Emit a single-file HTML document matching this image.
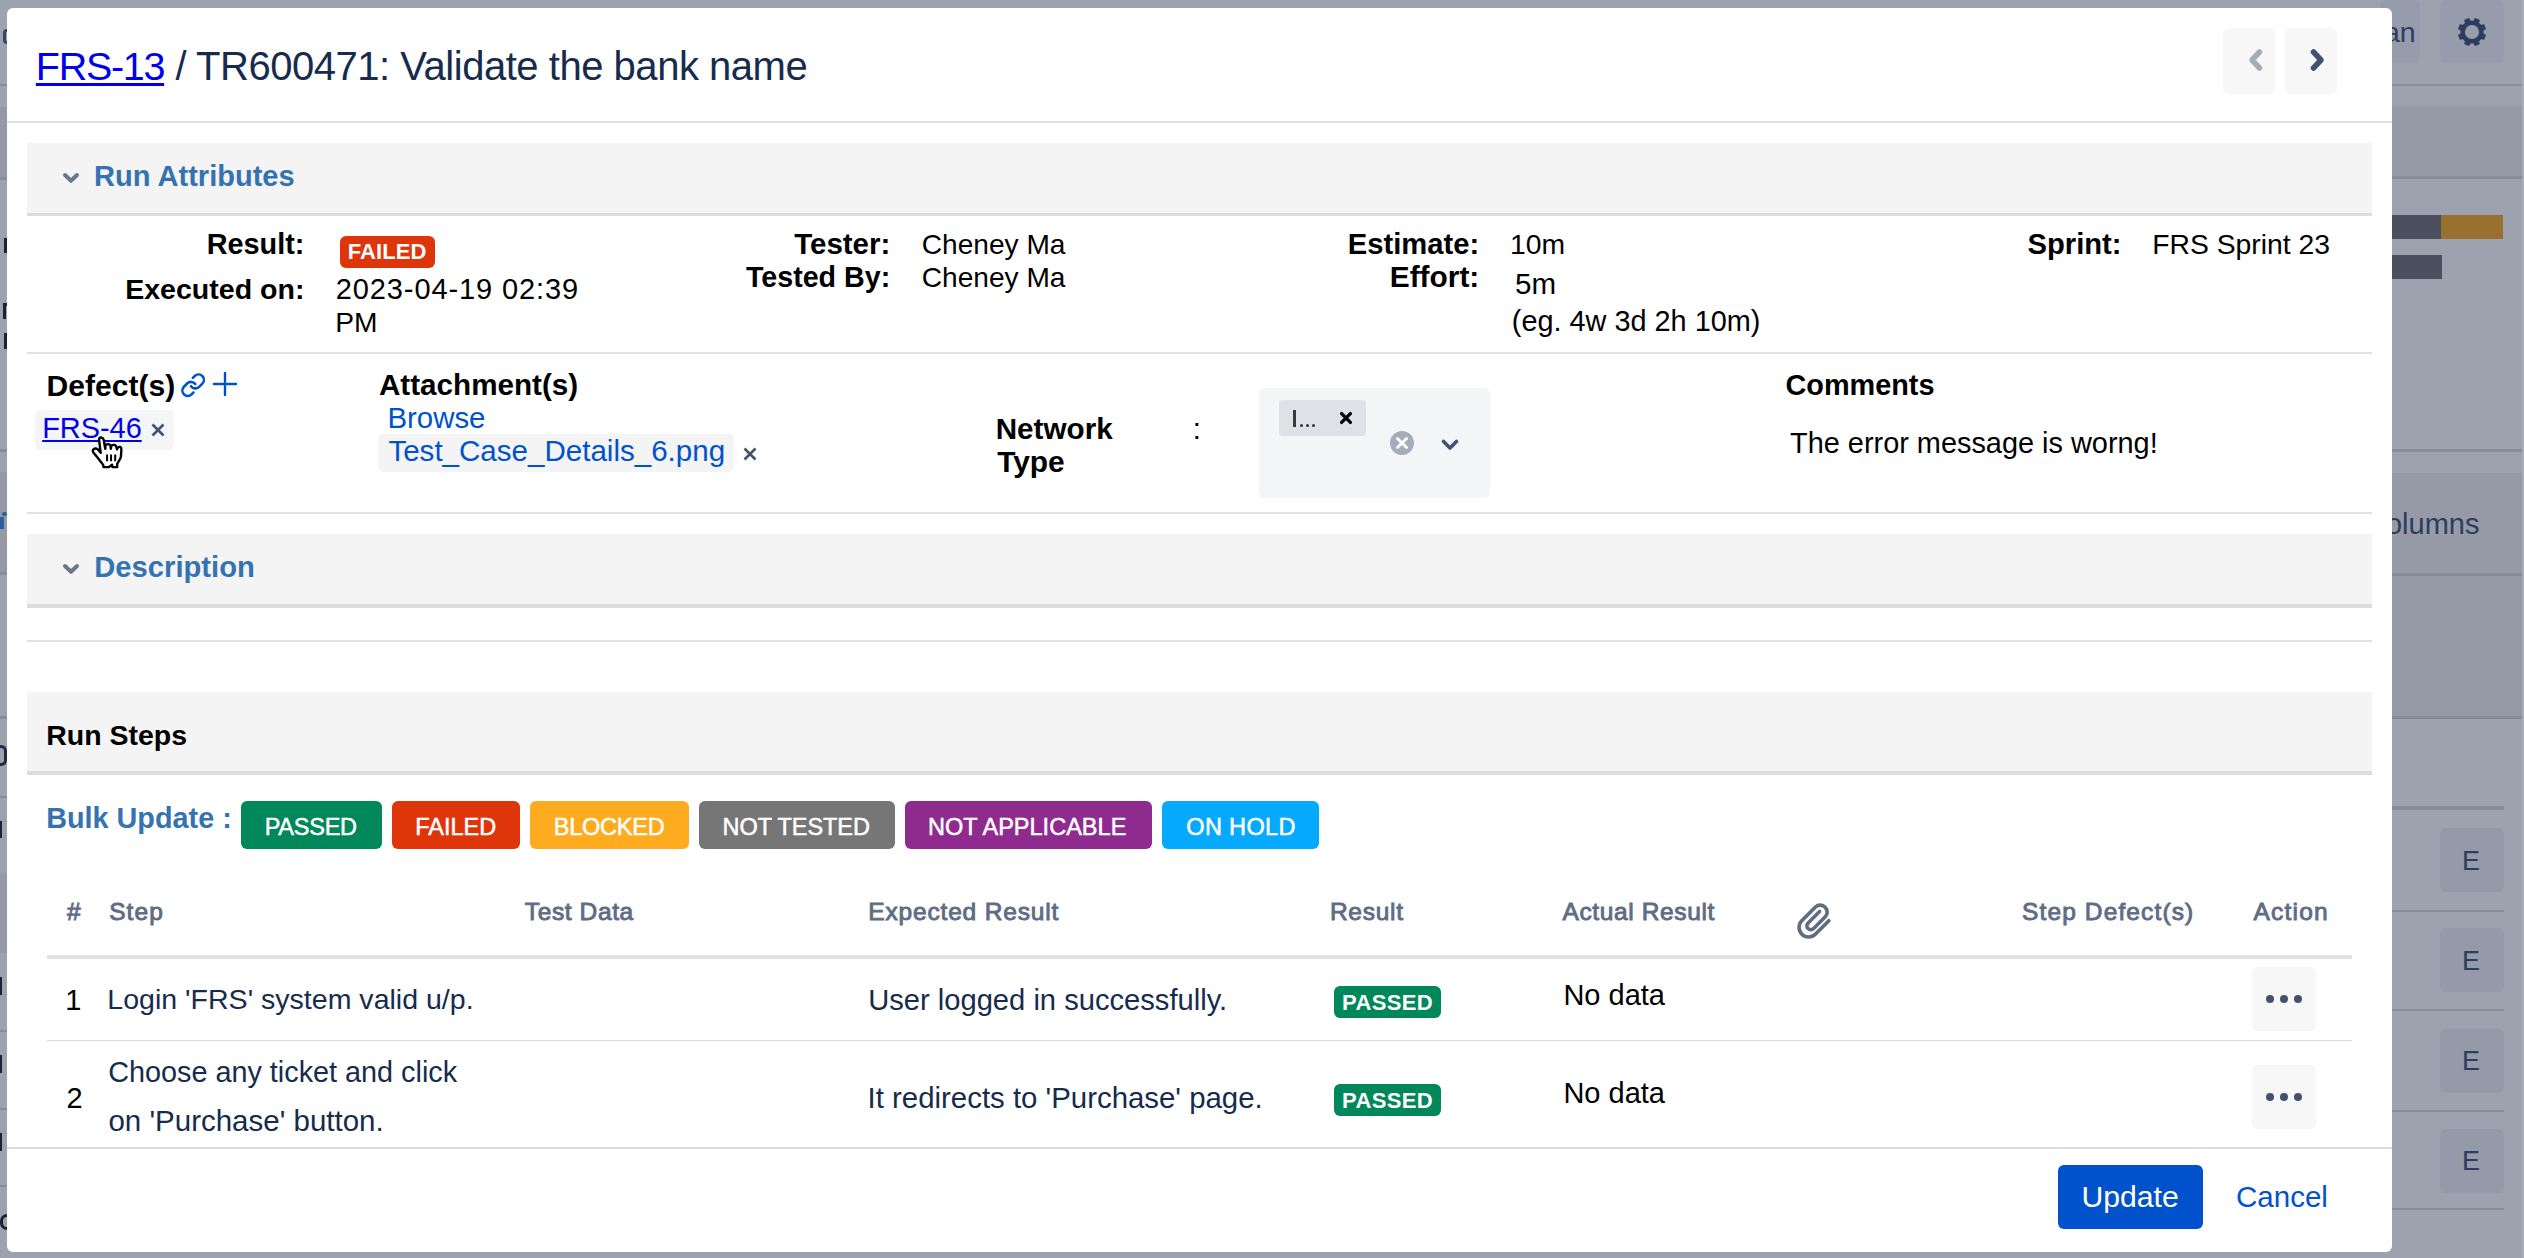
<!DOCTYPE html>
<html><head><meta charset="utf-8"><title>Test Run</title>
<style>
html,body{margin:0;padding:0;}
body{width:2524px;height:1258px;position:relative;overflow:hidden;background:#9ca2ae;font-family:"Liberation Sans", sans-serif;}
.t{position:absolute;white-space:pre;line-height:1.15;font-family:"Liberation Sans", sans-serif;}
</style></head><body>
<div style="position:absolute;left:2380px;top:0px;width:40.00px;height:63.00px;background:#969cab;border-radius:6px;"></div>
<div style="position:absolute;left:2440px;top:0px;width:64.00px;height:63.00px;background:#969cab;border-radius:6px;"></div>
<div style="position:absolute;left:2392px;top:84px;width:132.00px;height:2.00px;background:#878d99;border-radius:0px;"></div>
<div style="position:absolute;left:2392px;top:106px;width:132.00px;height:70.00px;background:#959aa6;border-radius:0px;"></div>
<div style="position:absolute;left:2392px;top:176px;width:132.00px;height:3.00px;background:#878d99;border-radius:0px;"></div>
<div style="position:absolute;left:2392px;top:215px;width:49.00px;height:24.00px;background:#4b505f;border-radius:0px;"></div>
<div style="position:absolute;left:2441px;top:215px;width:62.00px;height:24.00px;background:#9a702e;border-radius:0px;"></div>
<div style="position:absolute;left:2392px;top:255px;width:50.00px;height:24.00px;background:#4b505f;border-radius:0px;"></div>
<div style="position:absolute;left:2392px;top:449px;width:132.00px;height:3.00px;background:#878d99;border-radius:0px;"></div>
<div style="position:absolute;left:2392px;top:473px;width:132.00px;height:244.00px;background:#959aa6;border-radius:0px;"></div>
<div style="position:absolute;left:2392px;top:573px;width:132.00px;height:3.00px;background:#878d99;border-radius:0px;"></div>
<div style="position:absolute;left:2392px;top:716px;width:132.00px;height:3.00px;background:#878d99;border-radius:0px;"></div>
<div style="position:absolute;left:2392px;top:806px;width:112.00px;height:4.00px;background:#878d99;border-radius:0px;"></div>
<div style="position:absolute;left:2440px;top:828px;width:64.00px;height:64.00px;background:#959aa8;border-radius:6px;"></div>
<div style="position:absolute;left:2440px;top:928px;width:64.00px;height:64.00px;background:#959aa8;border-radius:6px;"></div>
<div style="position:absolute;left:2440px;top:1029px;width:64.00px;height:64.00px;background:#959aa8;border-radius:6px;"></div>
<div style="position:absolute;left:2440px;top:1129px;width:64.00px;height:64.00px;background:#959aa8;border-radius:6px;"></div>
<div style="position:absolute;left:2392px;top:910px;width:112.00px;height:2.00px;background:#878d99;border-radius:0px;"></div>
<div style="position:absolute;left:2392px;top:1009px;width:112.00px;height:2.00px;background:#878d99;border-radius:0px;"></div>
<div style="position:absolute;left:2392px;top:1110px;width:112.00px;height:2.00px;background:#878d99;border-radius:0px;"></div>
<div style="position:absolute;left:2392px;top:1208px;width:112.00px;height:2.00px;background:#878d99;border-radius:0px;"></div>
<div style="position:absolute;left:2522px;top:0px;width:2.00px;height:1258.00px;background:#a8adb8;border-radius:0px;"></div>
<div style="position:absolute;left:0px;top:84px;width:7.00px;height:2.00px;background:#878d99;border-radius:0px;"></div>
<div style="position:absolute;left:0px;top:107px;width:7.00px;height:71.00px;background:#959aa6;border-radius:0px;"></div>
<div style="position:absolute;left:0px;top:177px;width:7.00px;height:3.00px;background:#878d99;border-radius:0px;"></div>
<div style="position:absolute;left:0px;top:449px;width:7.00px;height:3.00px;background:#878d99;border-radius:0px;"></div>
<div style="position:absolute;left:0px;top:472px;width:7.00px;height:102.00px;background:#959aa6;border-radius:0px;"></div>
<div style="position:absolute;left:0px;top:572px;width:7.00px;height:3.00px;background:#878d99;border-radius:0px;"></div>
<div style="position:absolute;left:0px;top:716px;width:7.00px;height:3.00px;background:#878d99;border-radius:0px;"></div>
<div style="position:absolute;left:0px;top:796px;width:7.00px;height:2.00px;background:#878d99;border-radius:0px;"></div>
<div style="position:absolute;left:0px;top:873px;width:7.00px;height:80.00px;background:#959aa6;border-radius:0px;"></div>
<div style="position:absolute;left:0px;top:1030px;width:7.00px;height:2.00px;background:#878d99;border-radius:0px;"></div>
<div style="position:absolute;left:0px;top:1108px;width:7.00px;height:2.00px;background:#878d99;border-radius:0px;"></div>
<div style="position:absolute;left:0px;top:1185px;width:7.00px;height:2.00px;background:#878d99;border-radius:0px;"></div>
<div style="position:absolute;left:2.5px;top:29px;width:4.50px;height:15.00px;background:transparent;border-radius:0px;border:3px solid #34466a;border-right:none;border-radius:8px 0 0 8px;box-sizing:border-box;"></div>
<div style="position:absolute;left:3.5px;top:238px;width:3.00px;height:15.00px;background:#1a2235;border-radius:0px;"></div>
<div style="position:absolute;left:5px;top:238px;width:2.00px;height:3.00px;background:#1a2235;border-radius:0px;"></div>
<div style="position:absolute;left:2.5px;top:303px;width:3.00px;height:16.00px;background:#1a2235;border-radius:0px;"></div>
<div style="position:absolute;left:4.5px;top:303px;width:2.50px;height:3.00px;background:#1a2235;border-radius:0px;"></div>
<div style="position:absolute;left:4px;top:333px;width:3.00px;height:16.00px;background:#1a2235;border-radius:0px;"></div>
<div style="position:absolute;left:0px;top:517px;width:3.50px;height:12.00px;background:#2d5e9e;border-radius:0px;"></div>
<div style="position:absolute;left:2px;top:512px;width:5.00px;height:4.00px;background:#2d5e9e;border-radius:2px;"></div>
<div style="position:absolute;left:0px;top:745px;width:7.00px;height:21.00px;background:transparent;border-radius:0px;border:3px solid #1f2a44;border-left:none;border-radius:0 6px 6px 0;box-sizing:border-box;"></div>
<div style="position:absolute;left:0px;top:821px;width:1.50px;height:17.00px;background:#1a2235;border-radius:0px;"></div>
<div style="position:absolute;left:0px;top:977px;width:1.50px;height:18.00px;background:#1a2235;border-radius:0px;"></div>
<div style="position:absolute;left:0px;top:1055px;width:1.50px;height:18.00px;background:#1a2235;border-radius:0px;"></div>
<div style="position:absolute;left:0px;top:1133px;width:1.50px;height:18.00px;background:#1a2235;border-radius:0px;"></div>
<div style="position:absolute;left:0px;top:1214px;width:7.00px;height:16.00px;background:transparent;border-radius:0px;border:3.5px solid #1a2235;border-right:none;border-radius:8px 0 0 8px;box-sizing:border-box;"></div>
<div class="t" style="left:2383.90px;top:16px;font-size:28.5px;font-weight:400;color:#2c3d5f;letter-spacing:0px;">an</div>
<div class="t" style="left:2385.98px;top:508px;font-size:29.0px;font-weight:400;color:#2c3d5f;letter-spacing:0px;">olumns</div>
<div class="t" style="left:2461.91px;top:846px;font-size:27.0px;font-weight:400;color:#2c3d5f;letter-spacing:0px;">E</div>
<div class="t" style="left:2461.91px;top:946px;font-size:27.0px;font-weight:400;color:#2c3d5f;letter-spacing:0px;">E</div>
<div class="t" style="left:2461.91px;top:1046px;font-size:27.0px;font-weight:400;color:#2c3d5f;letter-spacing:0px;">E</div>
<div class="t" style="left:2461.91px;top:1146px;font-size:27.0px;font-weight:400;color:#2c3d5f;letter-spacing:0px;">E</div>
<svg style="position:absolute;left:2452px;top:12px;overflow:visible;" width="40" height="40" viewBox="0 0 40 40"><g transform="translate(20 20)" fill="#2c3d5f"><circle r="11.6"/><rect x="-2.9" y="-14.2" width="5.8" height="6" rx="1.2" transform="rotate(22.5)"/><rect x="-2.9" y="-14.2" width="5.8" height="6" rx="1.2" transform="rotate(67.5)"/><rect x="-2.9" y="-14.2" width="5.8" height="6" rx="1.2" transform="rotate(112.5)"/><rect x="-2.9" y="-14.2" width="5.8" height="6" rx="1.2" transform="rotate(157.5)"/><rect x="-2.9" y="-14.2" width="5.8" height="6" rx="1.2" transform="rotate(202.5)"/><rect x="-2.9" y="-14.2" width="5.8" height="6" rx="1.2" transform="rotate(247.5)"/><rect x="-2.9" y="-14.2" width="5.8" height="6" rx="1.2" transform="rotate(292.5)"/><rect x="-2.9" y="-14.2" width="5.8" height="6" rx="1.2" transform="rotate(337.5)"/><circle r="7.1" fill="#979dab"/></g></svg>
<div style="position:absolute;left:7px;top:8px;width:2385.00px;height:1244.00px;background:#ffffff;border-radius:6px;"></div>
<div class="t" style="left:35.84px;top:44px;font-size:39.5px;font-weight:400;color:#0000ee;letter-spacing:-1.3px;text-decoration:underline;text-decoration-thickness:3px;text-underline-offset:3px;">FRS-13</div>
<div class="t" style="left:175.50px;top:43px;font-size:40.0px;font-weight:400;color:#172b4d;letter-spacing:-0.474px;">/ TR600471: Validate the bank name</div>
<div style="position:absolute;left:2223px;top:28px;width:52.00px;height:66.00px;background:#f7f7f7;border-radius:6px;"></div>
<div style="position:absolute;left:2285px;top:28px;width:52.00px;height:66.00px;background:#f7f7f7;border-radius:6px;"></div>
<svg style="position:absolute;left:2240px;top:45px;overflow:visible;" width="28" height="30" viewBox="0 0 28 30"><path d="M19.5 7 L12 15 L19.5 23" fill="none" stroke="#a5adba" stroke-width="5.5" stroke-linecap="round" stroke-linejoin="round"/></svg>
<svg style="position:absolute;left:2304px;top:45px;overflow:visible;" width="28" height="30" viewBox="0 0 28 30"><path d="M9.5 7 L17 15 L9.5 23" fill="none" stroke="#42526e" stroke-width="5.5" stroke-linecap="round" stroke-linejoin="round"/></svg>
<div style="position:absolute;left:7px;top:121px;width:2385.00px;height:2.00px;background:#e1e1e1;border-radius:0px;"></div>
<div style="position:absolute;left:27px;top:143px;width:2345.00px;height:70.00px;background:#f4f4f4;border-radius:0px;"></div>
<div style="position:absolute;left:27px;top:213px;width:2345.00px;height:3.00px;background:#dcdcdc;border-radius:0px;"></div>
<svg style="position:absolute;left:60px;top:170px;overflow:visible;" width="22" height="16" viewBox="0 0 22 16"><path d="M5 5 L11 10.8 L17 5" fill="none" stroke="#6b778c" stroke-width="4" stroke-linecap="round" stroke-linejoin="round"/></svg>
<div class="t" style="left:94.06px;top:160px;font-size:29.05px;font-weight:700;color:#3572b0;letter-spacing:0px;">Run Attributes</div>
<div class="t" style="left:206.71px;top:228px;font-size:28.85px;font-weight:700;color:#000;letter-spacing:0px;">Result:</div>
<div class="t" style="left:125.20px;top:273px;font-size:28.55px;font-weight:700;color:#000;letter-spacing:0px;">Executed on:</div>
<div style="position:absolute;left:340px;top:236px;width:95.00px;height:32.00px;background:#de350b;border-radius:6px;"></div>
<div class="t" style="left:347.68px;top:239px;font-size:22.0px;font-weight:700;color:#fff;letter-spacing:0.121px;">FAILED</div>
<div class="t" style="left:335.75px;top:273px;font-size:29.0px;font-weight:400;color:#000;letter-spacing:0.9px;">2023-04-19 02:39</div>
<div class="t" style="left:335.24px;top:306px;font-size:28.2px;font-weight:400;color:#000;letter-spacing:0px;">PM</div>
<div class="t" style="left:794.17px;top:227px;font-size:29.5px;font-weight:700;color:#000;letter-spacing:0px;">Tester:</div>
<div class="t" style="left:745.92px;top:261px;font-size:28.65px;font-weight:700;color:#000;letter-spacing:0px;">Tested By:</div>
<div class="t" style="left:921.80px;top:229px;font-size:28.1px;font-weight:400;color:#000;letter-spacing:0px;">Cheney Ma</div>
<div class="t" style="left:921.80px;top:262px;font-size:28.1px;font-weight:400;color:#000;letter-spacing:0px;">Cheney Ma</div>
<div class="t" style="left:1347.77px;top:228px;font-size:29.2px;font-weight:700;color:#000;letter-spacing:0px;">Estimate:</div>
<div class="t" style="left:1389.76px;top:260px;font-size:29.85px;font-weight:700;color:#000;letter-spacing:0px;">Effort:</div>
<div class="t" style="left:1509.92px;top:228px;font-size:28.3px;font-weight:400;color:#000;letter-spacing:0px;">10m</div>
<div class="t" style="left:1515.12px;top:267px;font-size:29.55px;font-weight:400;color:#000;letter-spacing:0px;">5m</div>
<div class="t" style="left:1511.87px;top:305px;font-size:28.85px;font-weight:400;color:#000;letter-spacing:0px;">(eg. 4w 3d 2h 10m)</div>
<div class="t" style="left:2027.54px;top:228px;font-size:29.2px;font-weight:700;color:#000;letter-spacing:0px;">Sprint:</div>
<div class="t" style="left:2152.24px;top:228px;font-size:28.3px;font-weight:400;color:#000;letter-spacing:0px;">FRS Sprint 23</div>
<div style="position:absolute;left:27px;top:352px;width:2345.00px;height:2.00px;background:#dfe1e6;border-radius:0px;"></div>
<div class="t" style="left:46.59px;top:369px;font-size:30.1px;font-weight:700;color:#000;letter-spacing:0px;">Defect(s)</div>
<svg style="position:absolute;left:179px;top:371px;overflow:visible;" width="28" height="28" viewBox="0 0 28 28"><g transform="translate(1.2 1.2) scale(1.08)" fill="none" stroke="#0052cc" stroke-width="2.4" stroke-linecap="round" stroke-linejoin="round"><path d="M10 13a5 5 0 0 0 7.54.54l3-3a5 5 0 0 0-7.07-7.07l-1.72 1.71"/><path d="M14 11a5 5 0 0 0-7.54-.54l-3 3a5 5 0 0 0 7.07 7.07l1.71-1.71"/></g></svg>
<svg style="position:absolute;left:211px;top:370px;overflow:visible;" width="28" height="28" viewBox="0 0 28 28"><path d="M14 3 V25 M3 14 H25" fill="none" stroke="#0052cc" stroke-width="2.4" stroke-linecap="round"/></svg>
<div style="position:absolute;left:35.4px;top:410px;width:138.30px;height:39.60px;background:#f4f5f7;border-radius:6px;"></div>
<div class="t" style="left:42.19px;top:412px;font-size:28.9px;font-weight:400;color:#0000ee;letter-spacing:0px;text-decoration:underline;text-decoration-thickness:2.4px;text-underline-offset:1.5px;">FRS-46</div>
<svg style="position:absolute;left:150px;top:422px;overflow:visible;" width="16" height="16" viewBox="0 0 16 16"><path d="M2.5 2.5 L13.5 13.5 M13.5 2.5 L2.5 13.5" stroke="#42526e" stroke-width="2.6"/></svg>
<div class="t" style="left:378.91px;top:368px;font-size:29.65px;font-weight:700;color:#000;letter-spacing:0px;">Attachment(s)</div>
<div class="t" style="left:387.45px;top:401px;font-size:29.4px;font-weight:400;color:#0052cc;letter-spacing:0px;">Browse</div>
<div style="position:absolute;left:378.2px;top:434.2px;width:355.50px;height:37.50px;background:#f4f4f4;border-radius:5px;"></div>
<div class="t" style="left:388.41px;top:434px;font-size:29.55px;font-weight:400;color:#0052cc;letter-spacing:0px;">Test_Case_Details_6.png</div>
<svg style="position:absolute;left:742px;top:446px;overflow:visible;" width="16" height="16" viewBox="0 0 16 16"><path d="M2.5 2.5 L13.5 13.5 M13.5 2.5 L2.5 13.5" stroke="#42526e" stroke-width="2.6"/></svg>
<div class="t" style="left:995.72px;top:412px;font-size:29.65px;font-weight:700;color:#000;letter-spacing:0px;">Network</div>
<div class="t" style="left:997.20px;top:445px;font-size:29.9px;font-weight:700;color:#000;letter-spacing:0px;">Type</div>
<div class="t" style="left:1192.69px;top:413px;font-size:29.0px;font-weight:400;color:#000;letter-spacing:0px;">:</div>
<div style="position:absolute;left:1259.1px;top:387.8px;width:230.80px;height:110.00px;background:#f4f5f7;border-radius:6px;"></div>
<div style="position:absolute;left:1279px;top:400px;width:87.00px;height:36.00px;background:#dfe1e6;border-radius:4px;"></div>
<div style="position:absolute;left:1293.4px;top:410px;width:2.50px;height:17.00px;background:#3a3a3a;border-radius:0px;"></div>
<div style="position:absolute;left:1299.6px;top:423.8px;width:3.40px;height:3.40px;background:#333333;border-radius:2px;"></div>
<div style="position:absolute;left:1305.7px;top:423.8px;width:3.40px;height:3.40px;background:#333333;border-radius:2px;"></div>
<div style="position:absolute;left:1311.7px;top:423.8px;width:3.40px;height:3.40px;background:#333333;border-radius:2px;"></div>
<svg style="position:absolute;left:1336px;top:408px;overflow:visible;" width="20" height="20" viewBox="0 0 20 20"><path d="M5.6 5.6 L14.4 14.4 M14.4 5.6 L5.6 14.4" stroke="#000" stroke-width="3.3" stroke-linecap="round"/></svg>
<svg style="position:absolute;left:1390px;top:431px;overflow:visible;" width="24" height="24" viewBox="0 0 24 24"><circle cx="12" cy="12" r="12" fill="#a5adba"/><path d="M7.4 7.4 L16.6 16.6 M16.6 7.4 L7.4 16.6" stroke="#fff" stroke-width="2.8" stroke-linecap="round"/></svg>
<svg style="position:absolute;left:1440px;top:437.5px;overflow:visible;" width="20" height="16" viewBox="0 0 20 16"><path d="M3.5 3.5 L10 10 L16.5 3.5" fill="none" stroke="#42526e" stroke-width="3.6" stroke-linecap="round" stroke-linejoin="round"/></svg>
<div class="t" style="left:1785.45px;top:369px;font-size:28.85px;font-weight:700;color:#000;letter-spacing:0px;">Comments</div>
<div class="t" style="left:1790.02px;top:427px;font-size:28.9px;font-weight:400;color:#000;letter-spacing:0px;">The error message is worng!</div>
<div style="position:absolute;left:27px;top:512px;width:2345.00px;height:2.00px;background:#dfe1e6;border-radius:0px;"></div>
<div style="position:absolute;left:27px;top:534px;width:2345.00px;height:70.00px;background:#f4f4f4;border-radius:0px;"></div>
<div style="position:absolute;left:27px;top:604px;width:2345.00px;height:4.00px;background:#dcdcdc;border-radius:0px;"></div>
<svg style="position:absolute;left:60px;top:561px;overflow:visible;" width="22" height="16" viewBox="0 0 22 16"><path d="M5 5 L11 10.8 L17 5" fill="none" stroke="#6b778c" stroke-width="4" stroke-linecap="round" stroke-linejoin="round"/></svg>
<div class="t" style="left:94.25px;top:551px;font-size:29.2px;font-weight:700;color:#3572b0;letter-spacing:0px;">Description</div>
<div style="position:absolute;left:27px;top:640px;width:2345.00px;height:2.00px;background:#dfe1e6;border-radius:0px;"></div>
<div style="position:absolute;left:27px;top:692px;width:2345.00px;height:79.00px;background:#f4f4f4;border-radius:0px;"></div>
<div style="position:absolute;left:27px;top:771px;width:2345.00px;height:4.00px;background:#dcdcdc;border-radius:0px;"></div>
<div class="t" style="left:46.19px;top:719px;font-size:28.5px;font-weight:700;color:#000;letter-spacing:0px;">Run Steps</div>
<div class="t" style="left:46.17px;top:802px;font-size:28.8px;font-weight:700;color:#3572b0;letter-spacing:0px;">Bulk Update :</div>
<div style="position:absolute;left:241.2px;top:801.2px;width:140.60px;height:47.50px;background:#00875a;border-radius:6px;"></div>
<div class="t" style="left:264.67px;top:814px;font-size:23.5px;font-weight:400;color:#fff;letter-spacing:-0.245px;-webkit-text-stroke:0.5px #fff;">PASSED</div>
<div style="position:absolute;left:392px;top:801.2px;width:127.90px;height:47.50px;background:#de350b;border-radius:6px;"></div>
<div class="t" style="left:415.17px;top:814px;font-size:23.5px;font-weight:400;color:#fff;letter-spacing:-0.001px;-webkit-text-stroke:0.5px #fff;">FAILED</div>
<div style="position:absolute;left:530.2px;top:801.2px;width:158.80px;height:47.50px;background:#ffab20;border-radius:6px;"></div>
<div class="t" style="left:553.87px;top:814px;font-size:23.5px;font-weight:400;color:#fff;letter-spacing:-0.257px;-webkit-text-stroke:0.5px #fff;">BLOCKED</div>
<div style="position:absolute;left:698.9px;top:801.2px;width:196.00px;height:47.50px;background:#767676;border-radius:6px;"></div>
<div class="t" style="left:722.57px;top:814px;font-size:23.5px;font-weight:400;color:#fff;letter-spacing:-0.074px;-webkit-text-stroke:0.5px #fff;">NOT TESTED</div>
<div style="position:absolute;left:905px;top:801.2px;width:247.00px;height:47.50px;background:#8f2b8f;border-radius:6px;"></div>
<div class="t" style="left:927.97px;top:814px;font-size:23.5px;font-weight:400;color:#fff;letter-spacing:0.018px;-webkit-text-stroke:0.5px #fff;">NOT APPLICABLE</div>
<div style="position:absolute;left:1162.1px;top:801.2px;width:156.70px;height:47.50px;background:#05aaff;border-radius:6px;"></div>
<div class="t" style="left:1186.31px;top:814px;font-size:23.5px;font-weight:400;color:#fff;letter-spacing:0.344px;-webkit-text-stroke:0.5px #fff;">ON HOLD</div>
<div class="t" style="left:67.05px;top:898px;font-size:24.5px;font-weight:400;color:#5e6c84;letter-spacing:0px;-webkit-text-stroke:0.9px #5e6c84;">#</div>
<div class="t" style="left:109.17px;top:898px;font-size:24.5px;font-weight:400;color:#5e6c84;letter-spacing:1.122px;-webkit-text-stroke:0.9px #5e6c84;">Step</div>
<div class="t" style="left:524.76px;top:898px;font-size:24.5px;font-weight:400;color:#5e6c84;letter-spacing:0.626px;-webkit-text-stroke:0.9px #5e6c84;">Test Data</div>
<div class="t" style="left:868.29px;top:898px;font-size:24.5px;font-weight:400;color:#5e6c84;letter-spacing:0.829px;-webkit-text-stroke:0.9px #5e6c84;">Expected Result</div>
<div class="t" style="left:1329.89px;top:898px;font-size:24.5px;font-weight:400;color:#5e6c84;letter-spacing:0.732px;-webkit-text-stroke:0.9px #5e6c84;">Result</div>
<div class="t" style="left:1562.45px;top:898px;font-size:24.5px;font-weight:400;color:#5e6c84;letter-spacing:0.634px;-webkit-text-stroke:0.9px #5e6c84;">Actual Result</div>
<div class="t" style="left:2021.97px;top:898px;font-size:24.5px;font-weight:400;color:#5e6c84;letter-spacing:1.13px;-webkit-text-stroke:0.9px #5e6c84;">Step Defect(s)</div>
<div class="t" style="left:2253.45px;top:898px;font-size:24.5px;font-weight:400;color:#5e6c84;letter-spacing:1.217px;-webkit-text-stroke:0.9px #5e6c84;">Action</div>
<svg style="position:absolute;left:1790px;top:895px;overflow:visible;" width="50" height="50" viewBox="0 0 50 50"><path d="M38.87 25.77 L25.29 39.35 A9.58 9.58 0 0 1 11.75 25.8 L25.46 12.08 A6.92 6.92 0 0 1 35.24 21.87 L23.41 33.7 A3.9 3.9 0 0 1 17.9 28.19 L29.59 16.5" fill="none" stroke="#5e6c84" stroke-width="3.6" stroke-linecap="round"/></svg>
<div style="position:absolute;left:47px;top:955px;width:2305.00px;height:4.00px;background:#dfe1e6;border-radius:0px;"></div>
<div class="t" style="left:65.27px;top:984px;font-size:29.0px;font-weight:400;color:#000;letter-spacing:0px;">1</div>
<div class="t" style="left:107.32px;top:983px;font-size:28.55px;font-weight:400;color:#172b4d;letter-spacing:0px;">Login &#x27;FRS&#x27; system valid u/p.</div>
<div class="t" style="left:868.16px;top:984px;font-size:29.15px;font-weight:400;color:#172b4d;letter-spacing:0px;">User logged in successfully.</div>
<div style="position:absolute;left:1334px;top:986px;width:107.10px;height:31.90px;background:#00875a;border-radius:6px;"></div>
<div class="t" style="left:1342.08px;top:990px;font-size:22.0px;font-weight:700;color:#fff;letter-spacing:0.358px;">PASSED</div>
<div class="t" style="left:1563.38px;top:979px;font-size:29.0px;font-weight:400;color:#000;letter-spacing:0px;">No data</div>
<div style="position:absolute;left:2251.8px;top:966.8px;width:64.20px;height:64.10px;background:#f7f7f7;border-radius:6px;"></div>
<div style="position:absolute;left:2265.7px;top:994.8px;width:8px;height:8px;border-radius:4px;background:#42526e"></div>
<div style="position:absolute;left:2280.0px;top:994.8px;width:8px;height:8px;border-radius:4px;background:#42526e"></div>
<div style="position:absolute;left:2294.2px;top:994.8px;width:8px;height:8px;border-radius:4px;background:#42526e"></div>
<div style="position:absolute;left:47px;top:1039.6px;width:2305.00px;height:1.80px;background:#dcdcdc;border-radius:0px;"></div>
<div class="t" style="left:66.55px;top:1082px;font-size:29.0px;font-weight:400;color:#000;letter-spacing:0px;">2</div>
<div class="t" style="left:108.16px;top:1056px;font-size:28.8px;font-weight:400;color:#172b4d;letter-spacing:0px;">Choose any ticket and click</div>
<div class="t" style="left:108.42px;top:1104px;font-size:29.5px;font-weight:400;color:#172b4d;letter-spacing:0px;">on &#x27;Purchase&#x27; button.</div>
<div class="t" style="left:867.55px;top:1081px;font-size:29.4px;font-weight:400;color:#172b4d;letter-spacing:0px;">It redirects to &#x27;Purchase&#x27; page.</div>
<div style="position:absolute;left:1334px;top:1084px;width:107.10px;height:31.60px;background:#00875a;border-radius:6px;"></div>
<div class="t" style="left:1342.08px;top:1088px;font-size:22.0px;font-weight:700;color:#fff;letter-spacing:0.358px;">PASSED</div>
<div class="t" style="left:1563.38px;top:1077px;font-size:29.0px;font-weight:400;color:#000;letter-spacing:0px;">No data</div>
<div style="position:absolute;left:2251.8px;top:1064.8px;width:64.20px;height:64.10px;background:#f7f7f7;border-radius:6px;"></div>
<div style="position:absolute;left:2265.7px;top:1092.8px;width:8px;height:8px;border-radius:4px;background:#42526e"></div>
<div style="position:absolute;left:2280.0px;top:1092.8px;width:8px;height:8px;border-radius:4px;background:#42526e"></div>
<div style="position:absolute;left:2294.2px;top:1092.8px;width:8px;height:8px;border-radius:4px;background:#42526e"></div>
<div style="position:absolute;left:7px;top:1147px;width:2385.00px;height:2.00px;background:#dcdcdc;border-radius:0px;"></div>
<div style="position:absolute;left:2057.8px;top:1165px;width:145.20px;height:63.70px;background:#0052cc;border-radius:6px;"></div>
<div class="t" style="left:2081.39px;top:1180px;font-size:30.2px;font-weight:400;color:#fff;letter-spacing:0px;">Update</div>
<div class="t" style="left:2236.03px;top:1180px;font-size:29.5px;font-weight:400;color:#0052cc;letter-spacing:0px;">Cancel</div>
<svg style="position:absolute;left:85px;top:425px;overflow:visible;" width="50" height="50" viewBox="0 0 50 50"><g transform="scale(0.03975)"><path d="M395 700 L355 380 C345 300 440 290 470 370 L510 600 L515 520 C530 470 620 470 640 520 L650 600 L660 540 C680 480 780 490 790 560 L805 610 L820 580 C850 530 920 545 915 620 L905 790 C895 870 830 930 810 980 L810 1060 L690 1060 L680 1000 L600 1060 L465 1060 L460 1010 C380 900 280 780 210 690 C170 630 240 560 320 610 Z" fill="#fff" stroke="#000" stroke-width="60" stroke-linejoin="round"/><path d="M555 740 V915 M655 740 V915 M760 740 V915" stroke="#000" stroke-width="50"/></g></svg>
</body></html>
